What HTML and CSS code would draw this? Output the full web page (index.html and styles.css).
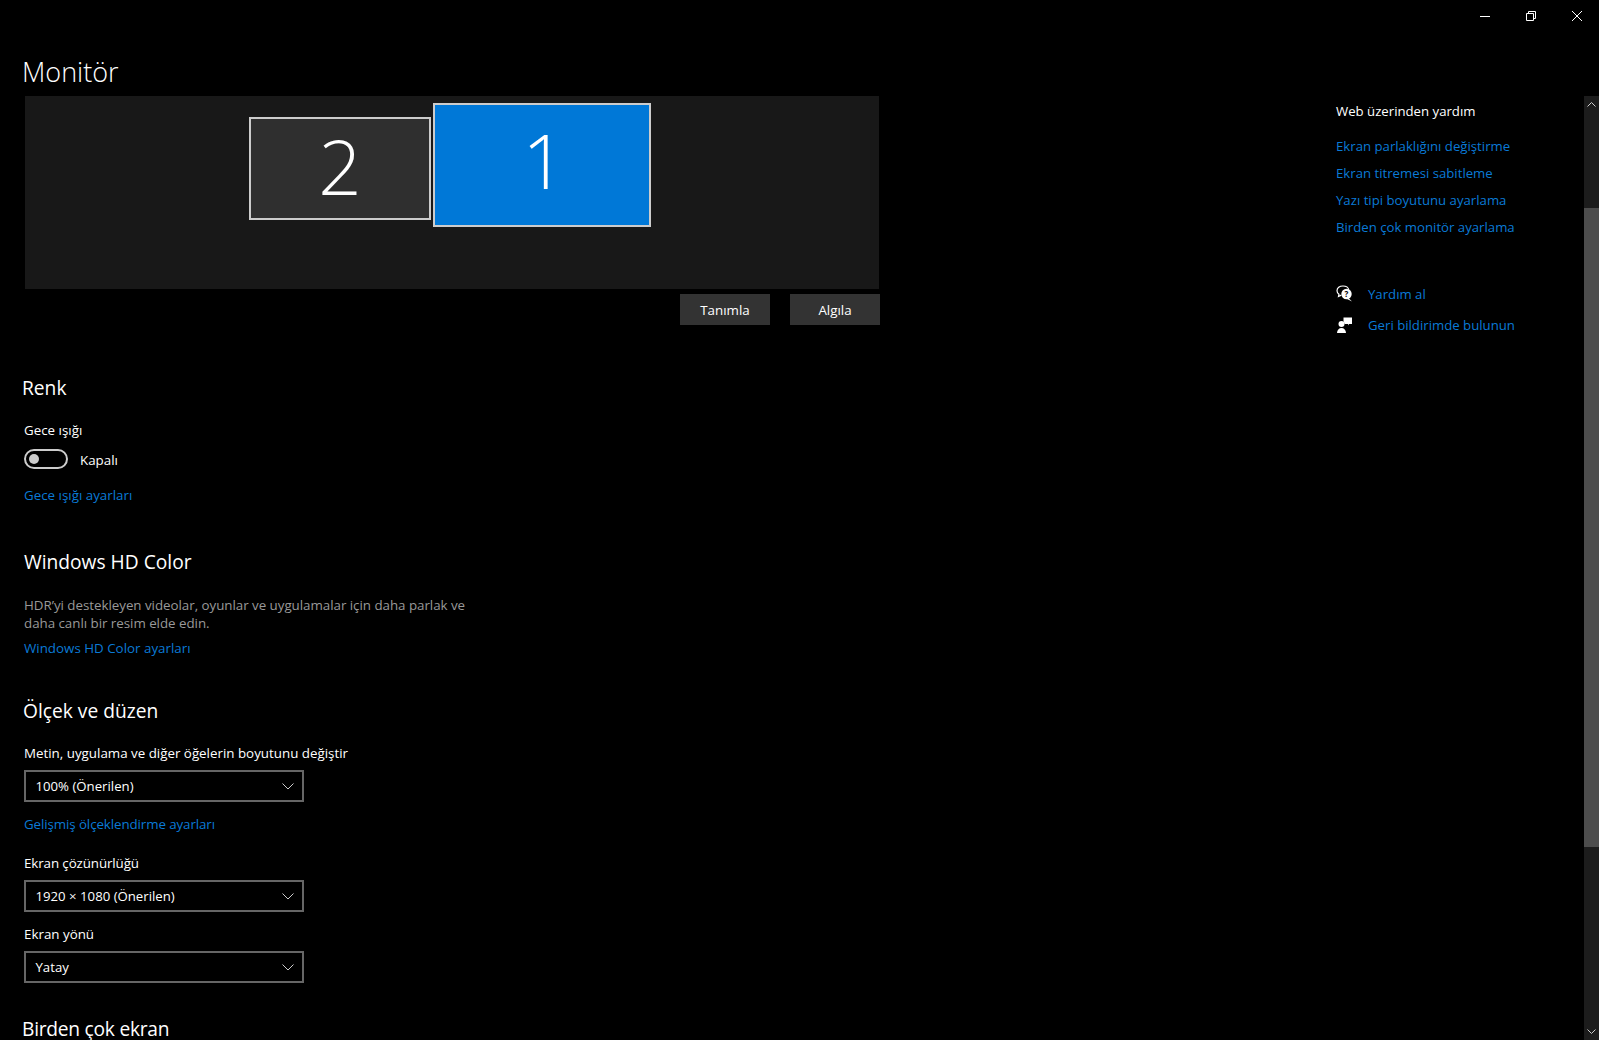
FILE: index.html
```html
<!DOCTYPE html>
<html lang="tr">
<head>
<meta charset="utf-8">
<title>Monitör</title>
<link rel="stylesheet" href="styles.css">
</head>
<body>
<div class="window">
  <div class="caption">
    <span class="cap-btn"><svg width="10" height="10" viewBox="0 0 10 10"><path d="M0 5.500H10" stroke="#fff"/></svg></span>
    <span class="cap-btn"><svg width="10" height="10" viewBox="0 0 10 10"><path d="M.5 2.500h7v7h-7zM2.500 2.500V.5h7v7h-2" fill="none" stroke="#fff"/></svg></span>
    <span class="cap-btn"><svg width="10" height="10" viewBox="0 0 10 10"><path d="M0 0L10 10M10 0L0 10" stroke="#fff"/></svg></span>
  </div>
  <div class="body">
    <main class="main">
      <h1 class="page-title">Monitör</h1>
      <div class="arrange">
        <div class="mon mon-2">2</div>
        <div class="mon mon-1">1</div>
      </div>
      <div class="btn-row">
        <button class="btn">Tanımla</button>
        <button class="btn">Algıla</button>
      </div>

      <h2 class="section s-renk">Renk</h2>
      <div class="label s-gece">Gece ışığı</div>
      <div class="toggle-row">
        <span class="toggle"><span class="knob"></span></span>
        <span class="toggle-text">Kapalı</span>
      </div>
      <a class="link s-gece-link">Gece ışığı ayarları</a>

      <h2 class="section s-hd">Windows HD Color</h2>
      <p class="desc">HDR’yi destekleyen videolar, oyunlar ve uygulamalar için daha parlak ve<br>daha canlı bir resim elde edin.</p>
      <a class="link s-hd-link">Windows HD Color ayarları</a>

      <h2 class="section s-olcek">Ölçek ve düzen</h2>
      <div class="label s-metin">Metin, uygulama ve diğer öğelerin boyutunu değiştir</div>
      <div class="combo"><span>100% (Önerilen)</span><svg width="12" height="7" viewBox="0 0 12 7"><path d="M.5.5L6 6L11.5.5" fill="none" stroke="#ccc"/></svg></div>
      <a class="link s-gelismis">Gelişmiş ölçeklendirme ayarları</a>
      <div class="label s-coz">Ekran çözünürlüğü</div>
      <div class="combo"><span>1920 × 1080 (Önerilen)</span><svg width="12" height="7" viewBox="0 0 12 7"><path d="M.5.5L6 6L11.5.5" fill="none" stroke="#ccc"/></svg></div>
      <div class="label s-yon">Ekran yönü</div>
      <div class="combo"><span>Yatay</span><svg width="12" height="7" viewBox="0 0 12 7"><path d="M.5.5L6 6L11.5.5" fill="none" stroke="#ccc"/></svg></div>
      <h2 class="section s-birden">Birden çok ekran</h2>
    </main>
    <aside class="aside">
      <div class="aside-title">Web üzerinden yardım</div>
      <a class="aside-link">Ekran parlaklığını değiştirme</a>
      <a class="aside-link">Ekran titremesi sabitleme</a>
      <a class="aside-link">Yazı tipi boyutunu ayarlama</a>
      <a class="aside-link">Birden çok monitör ayarlama</a>
      <div class="help-row help-first">
        <svg width="17" height="17" viewBox="0 0 17 17"><path d="M7 1C3.500 1 1 3 1 5.700c0 1.500.8 2.700 2 3.500L2.500 11.500l2.800-1.400" fill="none" stroke="#fff" stroke-width="1.200"/><path d="M7 1c3 0 5.300 1.600 5.800 3.800" fill="none" stroke="#fff" stroke-width="1.200"/><circle cx="10.500" cy="9" r="5.200" fill="#fff"/><path d="M12.500 13L16 16.500L11 14z" fill="#fff"/><text x="10.500" y="12" class="qmark">?</text></svg>
        <a class="help-link">Yardım al</a>
      </div>
      <div class="help-row">
        <svg width="17" height="17" viewBox="0 0 17 17"><circle cx="5.500" cy="8" r="3" fill="#fff"/><path d="M1 17c0-3 2-5 4.500-5S10 14 10 17z" fill="#fff"/><path d="M7.500 1.500h8.500v6.500h-3l-1 1.500V8H8.500a4 4 0 0 0-1-2.500z" fill="#fff"/></svg>
        <a class="help-link">Geri bildirimde bulunun</a>
      </div>
    </aside>
    <div class="scrollbar">
      <div class="sb-arrow"><svg width="9" height="5" viewBox="0 0 9 5"><path d="M.5 4.500L4.500.5L8.500 4.500" fill="none" stroke="#ccc"/></svg></div>
      <div class="sb-gap"></div>
      <div class="sb-thumb"></div>
      <div class="sb-fill"></div>
      <div class="sb-arrow"><svg width="9" height="5" viewBox="0 0 9 5"><path d="M.5.5L4.500 4.500L8.500.5" fill="none" stroke="#ccc"/></svg></div>
    </div>
  </div>
</div>
</body>
</html>
```
FILE: styles.css
```css
* { box-sizing: border-box; }
html, body { margin: 0; padding: 0; background: #000; }
body { font-family: "Open Sans", "Noto Sans", sans-serif; color: #fff; font-size: 13.35px; }
.window { width: 1599px; height: 1040px; overflow: hidden; display: flex; flex-direction: column; background: #000; }
.caption { height: 32px; flex: none; display: flex; justify-content: flex-end; }
.cap-btn { width: 46px; height: 32px; padding-left: 2px; display: flex; align-items: center; justify-content: center; }
.body { flex: 1; display: flex; min-height: 0; }
.main { width: 1336px; flex: none; padding-left: 24px; }
.page-title { margin: 20px 0 0 -2px; font-size: 27px; font-weight: 300; line-height: 40px; height: 40px; }
.arrange { position: relative; margin: 4px 0 0 1px; width: 854px; height: 193px; background: #181818; }
.mon { position: absolute; display: flex; align-items: center; justify-content: center; font-weight: 300; font-size: 76px; border: 2px solid #ccc; }
.mon-2 { left: 224px; top: 21px; width: 182px; height: 103px; background: #2f2f2f; padding-bottom: 6px; }
.mon-1 { left: 408px; top: 7px; width: 218px; height: 124px; background: #0078d7; padding: 0 0 12px 4px; }
.btn-row { display: flex; justify-content: flex-end; gap: 20px; width: 856px; margin-top: 5px; }
.btn { width: 90px; height: 31px; border: 0; background: #333; color: #fff; font: inherit; padding: 0; }
.section { margin: 0 0 0 -1px; font-size: 19.2px; font-weight: 400; line-height: 28px; height: 28px; }
.label { line-height: 20px; height: 20px; }
.link { display: block; line-height: 20px; height: 20px; color: #0a7ad6; }
.s-renk { margin: 49px 0 0 -2px; }
.s-gece { margin-top: 18px; }
.toggle-row { margin-top: 9px; height: 20px; display: flex; align-items: center; }
.toggle { width: 44px; height: 20px; border: 2px solid #ccc; border-radius: 10px; display: flex; align-items: center; padding-left: 3px; }
.knob { width: 10px; height: 10px; border-radius: 50%; background: #ccc; }
.toggle-text { margin-left: 12px; padding-top: 1px; }
.s-gece-link { margin-top: 16px; }
.s-hd { margin: 43px 0 0 0; }
.desc { margin: 20px 0 0; color: #999; line-height: 18px; letter-spacing: -0.03px; }
.s-hd-link { margin-top: 6px; }
.s-olcek { margin-top: 39px; }
.s-metin { margin-top: 18px; }
.combo { margin-top: 7px; width: 280px; height: 32px; border: 2px solid #666; display: flex; align-items: center; justify-content: space-between; padding: 0 8px 0 9.500px; font-size: 13.2px; }
.s-gelismis { margin-top: 12px; letter-spacing: -0.1px; }
.s-coz { margin-top: 19px; letter-spacing: -0.1px; }
.s-yon { margin-top: 12px; }
.s-birden { margin: 32px 0 0 -2px; letter-spacing: -0.25px; }
.aside { width: 248px; flex: none; padding-top: 69px; font-size: 13.2px; }
.aside-title { line-height: 20px; height: 20px; margin-bottom: 12px; }
.aside-link { display: block; height: 27px; line-height: 27px; color: #0a7ad6; }
.help-row { display: flex; align-items: center; height: 31px; }
.help-first { margin-top: 37px; }
.help-link { margin-left: 15px; color: #0a7ad6; }
.qmark { font-size: 8px; font-weight: 700; text-anchor: middle; fill: #000; }
.scrollbar { width: 15px; flex: none; margin-top: 64px; background: #1c1c1c; display: flex; flex-direction: column; }
.sb-arrow { height: 17px; flex: none; display: flex; align-items: center; justify-content: center; }
.sb-gap { height: 95px; flex: none; }
.sb-thumb { height: 639px; flex: none; background: #4d4d4d; }
.sb-fill { flex: 1; }
```
